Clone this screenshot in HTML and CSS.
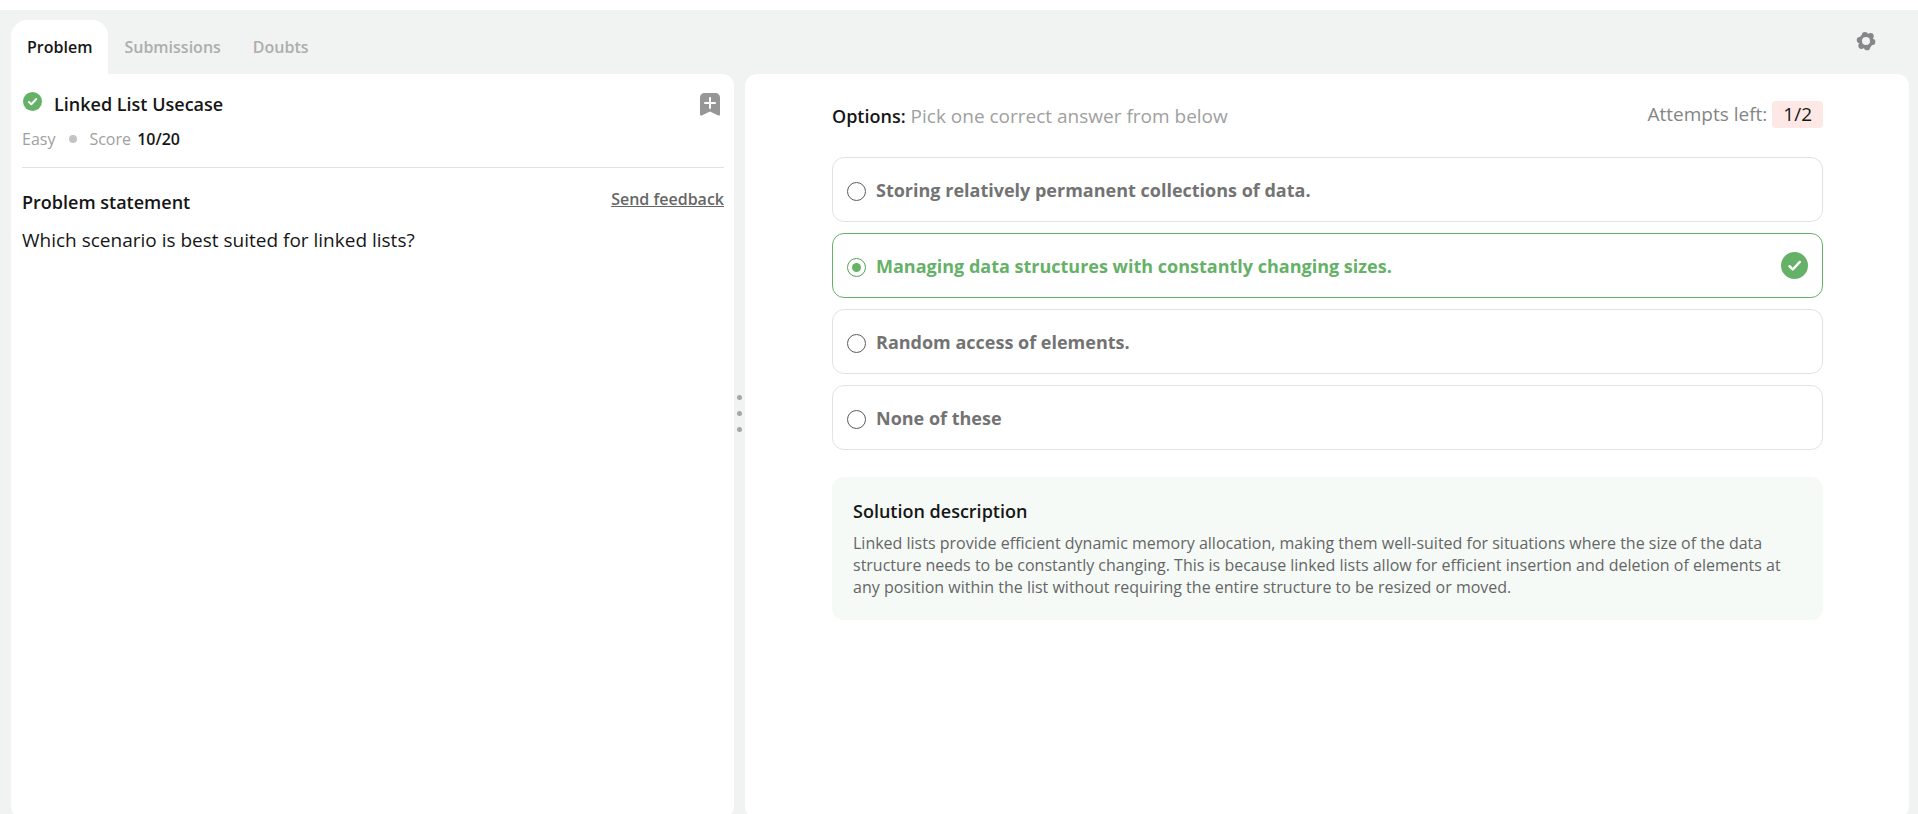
FILE: index.html
```html
<!DOCTYPE html>
<html lang="en">
<head>
<meta charset="utf-8">
<meta name="viewport" content="width=device-width, initial-scale=1">
<title>Linked List Usecase</title>
<link rel="stylesheet" href="styles.css">
</head>
<body>
<div class="app">
  <header class="topbar">
    <nav class="tabs" aria-label="Problem sections">
      <button class="tab tab-active" type="button">Problem</button>
      <button class="tab" type="button">Submissions</button>
      <button class="tab" type="button">Doubts</button>
    </nav>
    <button class="icon-button settings" type="button" aria-label="Settings">
      <svg width="20" height="20" viewBox="0 0 20 20">
        <g fill="#858889">
          <circle cx="8.900" cy="4" r="3.100"/><circle cx="14.600" cy="5.200" r="3.100"/><circle cx="16.200" cy="10.900" r="3.100"/>
          <circle cx="11.100" cy="16.200" r="3.100"/><circle cx="5.400" cy="14.800" r="3.100"/><circle cx="3.800" cy="9.100" r="3.100"/>
          <circle cx="10" cy="10" r="7.400"/>
        </g>
        <circle cx="10" cy="10" r="4" fill="#f0f3f2"/>
      </svg>
    </button>
  </header>

  <main class="workspace">
    <section class="panel problem">
      <div class="title-row">
        <svg class="solved" width="19" height="19" viewBox="0 0 27 27" aria-hidden="true">
          <circle cx="13.500" cy="13.500" r="13.500" fill="#66b168"/>
          <path d="M8.500 14.200l3.300 3.300 7-7.600" fill="none" stroke="#fff" stroke-width="2.800" stroke-linecap="round" stroke-linejoin="round"/>
        </svg>
        <h1 class="heading">Linked List Usecase</h1>
        <button class="icon-button bookmark" type="button" aria-label="Bookmark">
          <svg width="20" height="23" viewBox="0 0 20 23">
            <path d="M4.500 0h11A4.500 4.500 0 0 1 20 4.500V21.500Q20 23 18.300 22.400L10 18.500 1.700 22.400Q0 23 0 21.500V4.500A4.500 4.500 0 0 1 4.500 0Z" fill="#969696"/>
            <path d="M10 5v10M5 10h10" stroke="#fff" stroke-width="2" stroke-linecap="round"/>
          </svg>
        </button>
      </div>
      <div class="meta">
        <span>Easy</span>
        <span class="meta-dot"></span>
        <span>Score <b class="score">10/20</b></span>
      </div>
      <div class="statement-row">
        <h2 class="heading">Problem statement</h2>
        <a class="feedback" href="#">Send feedback</a>
      </div>
      <p class="question">Which scenario is best suited for linked lists?</p>
    </section>

    <div class="splitter" role="separator" aria-orientation="vertical">
      <span class="grip"></span><span class="grip"></span><span class="grip"></span>
    </div>

    <section class="panel answer">
      <div class="answer-head">
        <p class="prompt"><b class="prompt-label">Options:</b> Pick one correct answer from below</p>
        <p class="attempts">Attempts left: <span class="badge">1/2</span></p>
      </div>
      <form class="options">
        <label class="option"><input class="radio" type="radio" name="answer"><span>Storing relatively permanent collections of data.</span></label>
        <label class="option option-correct"><input class="radio" type="radio" name="answer" checked><span>Managing data structures with constantly changing sizes.</span>
          <svg class="tick" width="27" height="27" viewBox="0 0 27 27" aria-hidden="true">
            <circle cx="13.500" cy="13.500" r="13.500" fill="#66b168"/>
            <path d="M8.500 14.200l3.300 3.300 7-7.600" fill="none" stroke="#fff" stroke-width="2.400" stroke-linecap="round" stroke-linejoin="round"/>
          </svg>
        </label>
        <label class="option"><input class="radio" type="radio" name="answer"><span>Random access of elements.</span></label>
        <label class="option"><input class="radio" type="radio" name="answer"><span>None of these</span></label>
      </form>
      <article class="solution">
        <h2 class="heading">Solution description</h2>
        <p class="solution-text">Linked lists provide efficient dynamic memory allocation, making them well-suited for situations where the size of the data structure needs to be constantly changing. This is because linked lists allow for efficient insertion and deletion of elements at any position within the list without requiring the entire structure to be resized or moved.</p>
      </article>
    </section>
  </main>
</div>
</body>
</html>
```
FILE: styles.css
```css
* { box-sizing: border-box; }

body {
  margin: 0;
  overflow: hidden;
  background: #fff;
  color: #161616;
  font: 400 16px/22px "Open Sans", "Noto Sans", sans-serif;
}

h1, h2, p { margin: 0; }
button, input { font: inherit; }
svg { display: block; }

.app {
  display: flex;
  flex-direction: column;
  height: calc(100vh + 4px);
  border-top: 10px solid #fff;
  background: #f0f3f2;
}

.topbar {
  display: flex;
  justify-content: space-between;
  padding: 10px 42px 0 11px;
}

.tabs { display: flex; }

.tab {
  height: 54px;
  padding: 0 16px;
  border: 0;
  border-radius: 16px 16px 0 0;
  background: transparent;
  color: #adadad;
  font-weight: 600;
}

.tab-active { background: #fff; color: #161616; }

.icon-button {
  padding: 0;
  border: 0;
  background: transparent;
}

.settings { align-self: flex-start; margin-top: 11px; }

.workspace {
  flex: 1;
  display: grid;
  grid-template-columns: 723fr 11px 1164fr;
  min-height: 0;
  padding: 0 9px 0 11px;
}

.panel { border-radius: 12px; background: #fff; }

.problem {
  padding: 17px 10px 0 11px;
  border-top-left-radius: 0;
}

.heading { font-size: 18px; line-height: 26px; font-weight: 600; }

.title-row { display: flex; align-items: center; padding-right: 4px; }
.solved { margin: 0 12px 5px 1px; }
.bookmark { margin-left: auto; }

.meta {
  display: flex;
  align-items: center;
  padding: 10px 0 16px;
  border-bottom: 1px solid #e2e2e2;
  color: #a0a0a0;
  line-height: 24px;
}

.meta-dot {
  width: 8px;
  height: 8px;
  margin: 0 12px 0 14px;
  border-radius: 50%;
  background: #c4c4c4;
}

.score { margin-left: 2px; color: #161616; font-weight: 600; }

.statement-row {
  display: flex;
  justify-content: space-between;
  align-items: flex-start;
  margin-top: 20px;
}

.statement-row .heading { padding-top: 1px; }

.feedback { color: #666; font-weight: 600; }

.question { margin-top: 12px; font-size: 19px; line-height: 26px; }

.splitter {
  display: flex;
  flex-direction: column;
  align-items: center;
  gap: 11px;
  padding-top: 321px;
}

.grip { width: 5px; height: 5px; border-radius: 50%; background: #a5a8a7; }

.answer { padding: 27px 86px 0 87px; }

.answer-head { display: flex; justify-content: space-between; align-items: flex-start; height: 27px; }
.prompt { color: #a0a0a0; font-size: 19px; line-height: 31px; }
.prompt-label { color: #161616; font-size: 18px; font-weight: 600; }

.attempts {
  display: flex;
  gap: 5px;
  color: #858585;
  font-size: 19px;
  line-height: 27px;
}

.badge {
  padding: 0 11px;
  border-radius: 4px;
  background: #fde8e5;
  color: #161616;
}

.options { display: grid; gap: 11px; margin-top: 29px; }

.option {
  display: flex;
  align-items: center;
  gap: 10px;
  min-height: 65px;
  padding: 0 14px;
  border: 1px solid #e2e2e2;
  border-radius: 12px;
  color: #737373;
  font-size: 18px;
  line-height: 26px;
  font-weight: 700;
}

.option-correct { border-color: #66b168; color: #66b168; }

.radio {
  appearance: none;
  display: grid;
  place-items: center;
  flex: none;
  width: 19px;
  height: 19px;
  margin: 3px 0 0;
  border: 1px solid #5c5c5c;
  border-radius: 50%;
}

.radio:checked { border-color: #4fa552; }

.radio:checked::before {
  content: "";
  width: 9px;
  height: 9px;
  border-radius: 50%;
  background: #66b168;
}

.tick { margin-left: auto; }

.solution {
  margin-top: 27px;
  padding: 21px 21px 22px;
  border-radius: 12px;
  background: #f5faf7;
}

.solution-text { margin-top: 8px; color: #666; }
```
